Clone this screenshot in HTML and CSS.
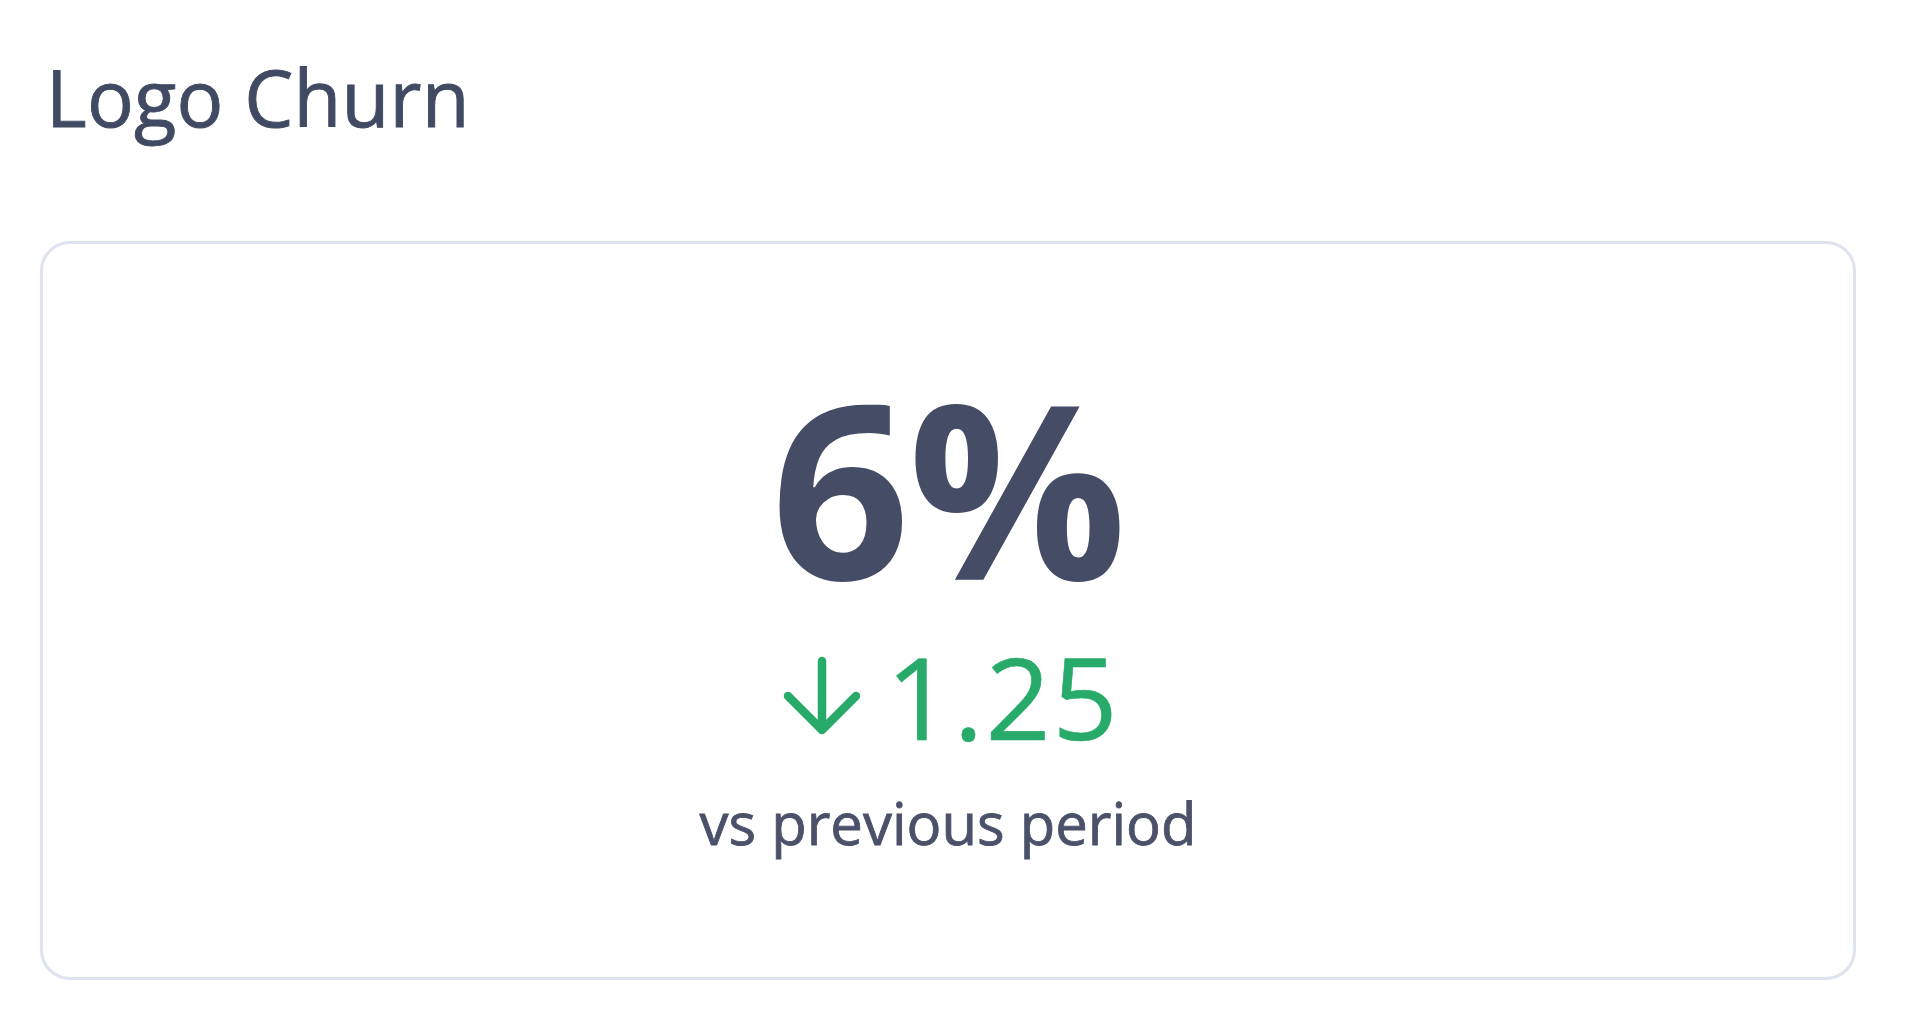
FILE: index.html
```html
<!DOCTYPE html>
<html lang="en">
<head>
<meta charset="utf-8">
<title>Logo Churn</title>
<link rel="stylesheet" href="styles.css">
</head>
<body>
<main class="widget">
  <h2 class="widget-title">Logo Churn</h2>
  <section class="kpi-card">
    <div class="kpi-value">6%</div>
    <div class="kpi-delta">
      <svg class="kpi-arrow" viewBox="0 0 80 82" aria-hidden="true"><path d="M40 6V75M6 41l34 34 34-34" fill="none" stroke="currentColor" stroke-width="8.5" stroke-linecap="round" stroke-linejoin="round"/></svg>
      <span class="kpi-delta-num">1.25</span>
    </div>
    <div class="kpi-sub">vs previous period</div>
  </section>
</main>
</body>
</html>
```

FILE: styles.css
```css
html, body {
  margin: 0;
  padding: 0;
  background: #ffffff;
}

body {
  font-family: "Open Sans", "Noto Sans", "Liberation Sans", sans-serif;
  color: #434b63;
}

.widget {
  padding: 44px 64px 0 40px;
  display: flex;
  flex-direction: column;
}

.widget-title {
  margin: 0 0 0 6px;
  font-size: 78px;
  font-weight: 400;
  line-height: 106px;
  color: #414a63;
  letter-spacing: 0.2px;
  -webkit-text-stroke: 0.9px #414a63;
}

.kpi-card {
  margin-top: 91px;
  height: 739px;
  border: 3px solid #dfe3f0;
  border-radius: 30px;
  display: flex;
  flex-direction: column;
  align-items: center;
  padding-top: 119px;
  box-sizing: border-box;
}

.kpi-value {
  font-size: 243px;
  font-weight: 700;
  line-height: 245px;
  color: #454d66;
  letter-spacing: -2px;
}

.kpi-delta {
  display: flex;
  align-items: center;
  gap: 24px;
  margin-top: 28px;
  padding-left: 6px;
  color: #28ab6a;
}

.kpi-arrow {
  width: 80px;
  height: 82px;
  flex: none;
}

.kpi-delta-num {
  font-size: 114px;
  line-height: 120px;
  font-weight: 400;
  letter-spacing: 2px;
  -webkit-text-stroke: 0.6px #28ab6a;
}

.kpi-sub {
  margin-top: 27px;
  font-size: 58px;
  line-height: 80px;
  font-weight: 400;
  color: #4a5169;
  -webkit-text-stroke: 0.8px #4a5169;
}
```
